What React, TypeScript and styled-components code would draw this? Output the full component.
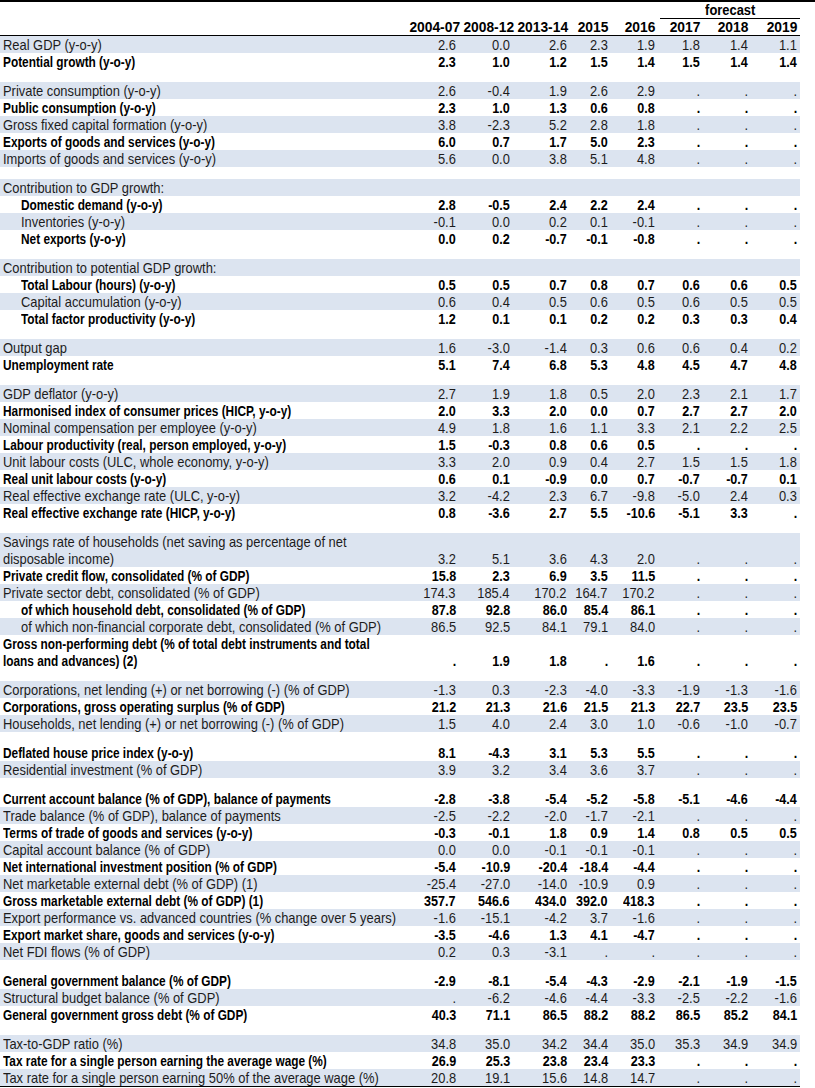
import React from 'react';
import styled, { createGlobalStyle } from 'styled-components';

// Country macro indicators table, forecast columns on the right
const COLS = '405px 54px 54px 57px 41px 47px 45px 48px 49px';
const SHADE = '#dce4f0';

type Line = {
  label: React.ReactNode;
  values: string[];
  bold?: boolean;
  indent?: boolean;
  lines?: number;
};

const D = ['.', '.', '.'];

const sections: Line[][] = [
  [
    { label: 'Real GDP (y-o-y)', values: ['2.6', '0.0', '2.6', '2.3', '1.9', '1.8', '1.4', '1.1'] },
    { label: 'Potential growth (y-o-y)', bold: true, values: ['2.3', '1.0', '1.2', '1.5', '1.4', '1.5', '1.4', '1.4'] },
  ],
  [
    { label: 'Private consumption (y-o-y)', values: ['2.6', '-0.4', '1.9', '2.6', '2.9', ...D] },
    { label: 'Public consumption (y-o-y)', bold: true, values: ['2.3', '1.0', '1.3', '0.6', '0.8', ...D] },
    { label: 'Gross fixed capital formation (y-o-y)', values: ['3.8', '-2.3', '5.2', '2.8', '1.8', ...D] },
    { label: 'Exports of goods and services (y-o-y)', bold: true, values: ['6.0', '0.7', '1.7', '5.0', '2.3', ...D] },
    { label: 'Imports of goods and services (y-o-y)', values: ['5.6', '0.0', '3.8', '5.1', '4.8', ...D] },
  ],
  [
    { label: 'Contribution to GDP growth:', values: [] },
    { label: 'Domestic demand (y-o-y)', bold: true, indent: true, values: ['2.8', '-0.5', '2.4', '2.2', '2.4', ...D] },
    { label: 'Inventories (y-o-y)', indent: true, values: ['-0.1', '0.0', '0.2', '0.1', '-0.1', ...D] },
    { label: 'Net exports (y-o-y)', bold: true, indent: true, values: ['0.0', '0.2', '-0.7', '-0.1', '-0.8', ...D] },
  ],
  [
    { label: 'Contribution to potential GDP growth:', values: [] },
    { label: 'Total Labour (hours) (y-o-y)', bold: true, indent: true, values: ['0.5', '0.5', '0.7', '0.8', '0.7', '0.6', '0.6', '0.5'] },
    { label: 'Capital accumulation (y-o-y)', indent: true, values: ['0.6', '0.4', '0.5', '0.6', '0.5', '0.6', '0.5', '0.5'] },
    { label: 'Total factor productivity (y-o-y)', bold: true, indent: true, values: ['1.2', '0.1', '0.1', '0.2', '0.2', '0.3', '0.3', '0.4'] },
  ],
  [
    { label: 'Output gap', values: ['1.6', '-3.0', '-1.4', '0.3', '0.6', '0.6', '0.4', '0.2'] },
    { label: 'Unemployment rate', bold: true, values: ['5.1', '7.4', '6.8', '5.3', '4.8', '4.5', '4.7', '4.8'] },
  ],
  [
    { label: 'GDP deflator (y-o-y)', values: ['2.7', '1.9', '1.8', '0.5', '2.0', '2.3', '2.1', '1.7'] },
    { label: 'Harmonised index of consumer prices (HICP, y-o-y)', bold: true, values: ['2.0', '3.3', '2.0', '0.0', '0.7', '2.7', '2.7', '2.0'] },
    { label: 'Nominal compensation per employee (y-o-y)', values: ['4.9', '1.8', '1.6', '1.1', '3.3', '2.1', '2.2', '2.5'] },
    { label: 'Labour productivity (real, person employed, y-o-y)', bold: true, values: ['1.5', '-0.3', '0.8', '0.6', '0.5', ...D] },
    { label: 'Unit labour costs (ULC, whole economy, y-o-y)', values: ['3.3', '2.0', '0.9', '0.4', '2.7', '1.5', '1.5', '1.8'] },
    { label: 'Real unit labour costs (y-o-y)', bold: true, values: ['0.6', '0.1', '-0.9', '0.0', '0.7', '-0.7', '-0.7', '0.1'] },
    { label: 'Real effective exchange rate (ULC, y-o-y)', values: ['3.2', '-4.2', '2.3', '6.7', '-9.8', '-5.0', '2.4', '0.3'] },
    { label: 'Real effective exchange rate (HICP, y-o-y)', bold: true, values: ['0.8', '-3.6', '2.7', '5.5', '-10.6', '-5.1', '3.3', '.'] },
  ],
  [
    {
      label: (<>Savings rate of households (net saving as percentage of net<br />disposable income)</>),
      lines: 2,
      values: ['3.2', '5.1', '3.6', '4.3', '2.0', ...D],
    },
    { label: 'Private credit flow, consolidated (% of GDP)', bold: true, values: ['15.8', '2.3', '6.9', '3.5', '11.5', ...D] },
    { label: 'Private sector debt, consolidated (% of GDP)', values: ['174.3', '185.4', '170.2', '164.7', '170.2', ...D] },
    { label: 'of which household debt, consolidated (% of GDP)', bold: true, indent: true, values: ['87.8', '92.8', '86.0', '85.4', '86.1', ...D] },
    { label: 'of which non-financial corporate debt, consolidated (% of GDP)', indent: true, values: ['86.5', '92.5', '84.1', '79.1', '84.0', ...D] },
    {
      label: (<>Gross non-performing debt (% of total debt instruments and total<br />loans and advances) (2)</>),
      bold: true,
      lines: 2,
      values: ['.', '1.9', '1.8', '.', '1.6', ...D],
    },
  ],
  [
    { label: 'Corporations, net lending (+) or net borrowing (-) (% of GDP)', values: ['-1.3', '0.3', '-2.3', '-4.0', '-3.3', '-1.9', '-1.3', '-1.6'] },
    { label: 'Corporations, gross operating surplus (% of GDP)', bold: true, values: ['21.2', '21.3', '21.6', '21.5', '21.3', '22.7', '23.5', '23.5'] },
    { label: 'Households, net lending (+) or net borrowing (-) (% of GDP)', values: ['1.5', '4.0', '2.4', '3.0', '1.0', '-0.6', '-1.0', '-0.7'] },
  ],
  [
    { label: 'Deflated house price index (y-o-y)', bold: true, values: ['8.1', '-4.3', '3.1', '5.3', '5.5', ...D] },
    { label: 'Residential investment (% of GDP)', values: ['3.9', '3.2', '3.4', '3.6', '3.7', ...D] },
  ],
  [
    { label: 'Current account balance (% of GDP), balance of payments', bold: true, values: ['-2.8', '-3.8', '-5.4', '-5.2', '-5.8', '-5.1', '-4.6', '-4.4'] },
    { label: 'Trade balance (% of GDP), balance of payments', values: ['-2.5', '-2.2', '-2.0', '-1.7', '-2.1', ...D] },
    { label: 'Terms of trade of goods and services (y-o-y)', bold: true, values: ['-0.3', '-0.1', '1.8', '0.9', '1.4', '0.8', '0.5', '0.5'] },
    { label: 'Capital account balance (% of GDP)', values: ['0.0', '0.0', '-0.1', '-0.1', '-0.1', ...D] },
    { label: 'Net international investment position (% of GDP)', bold: true, values: ['-5.4', '-10.9', '-20.4', '-18.4', '-4.4', ...D] },
    { label: 'Net marketable external debt (% of GDP) (1)', values: ['-25.4', '-27.0', '-14.0', '-10.9', '0.9', ...D] },
    { label: 'Gross marketable external debt (% of GDP) (1)', bold: true, values: ['357.7', '546.6', '434.0', '392.0', '418.3', ...D] },
    { label: 'Export performance vs. advanced countries (% change over 5 years)', values: ['-1.6', '-15.1', '-4.2', '3.7', '-1.6', ...D] },
    { label: 'Export market share, goods and services (y-o-y)', bold: true, values: ['-3.5', '-4.6', '1.3', '4.1', '-4.7', ...D] },
    { label: 'Net FDI flows (% of GDP)', values: ['0.2', '0.3', '-3.1', '.', '.', ...D] },
  ],
  [
    { label: 'General government balance (% of GDP)', bold: true, values: ['-2.9', '-8.1', '-5.4', '-4.3', '-2.9', '-2.1', '-1.9', '-1.5'] },
    { label: 'Structural budget balance (% of GDP)', values: ['.', '-6.2', '-4.6', '-4.4', '-3.3', '-2.5', '-2.2', '-1.6'] },
    { label: 'General government gross debt (% of GDP)', bold: true, values: ['40.3', '71.1', '86.5', '88.2', '88.2', '86.5', '85.2', '84.1'] },
  ],
  [
    { label: 'Tax-to-GDP ratio (%)', values: ['34.8', '35.0', '34.2', '34.4', '35.0', '35.3', '34.9', '34.9'] },
    { label: 'Tax rate for a single person earning the average wage (%)', bold: true, values: ['26.9', '25.3', '23.8', '23.4', '23.3', ...D] },
    { label: 'Tax rate for a single person earning 50% of the average wage (%)', values: ['20.8', '19.1', '15.6', '14.8', '14.7', ...D] },
  ],
];

const years = ['2004-07', '2008-12', '2013-14', '2015', '2016', '2017', '2018', '2019'];

const GlobalStyle = createGlobalStyle`
  html, body {
    margin: 0;
    padding: 0;
    background: #fff;
  }
  body {
    font-family: "Liberation Sans", Arial, sans-serif;
    font-size: 15px;
    color: #1a1a1a;
  }
`;

const Page = styled.div`
  width: 815px;
  border-top: 2px solid #000;
`;

const Table = styled.div`
  width: 800px;
  border-bottom: 1px solid #000;
`;

const Grid = styled.div`
  display: grid;
  grid-template-columns: ${COLS};
`;

const ForecastRow = styled(Grid)`
  height: 17px;
`;

const Forecast = styled.div`
  grid-column: 7 / 10;
  margin-left: 2px;
  border-bottom: 1px solid #000;
  display: flex;
  justify-content: center;
  font-weight: 700;
  color: #000;
  line-height: 16px;
`;

// no narrow face is installed: Arial-width text is squeezed to the Arial Narrow look
const Narrow = styled.span<{ $scale: number; $from: 'left' | 'right' | 'center' }>`
  display: inline-block;
  transform: scaleX(${(p) => p.$scale});
  transform-origin: ${(p) => p.$from} center;
`;

const YearRow = styled(Grid)`
  height: 16px;
  border-bottom: 1px solid #000;
  font-weight: 700;
  color: #000;
  line-height: 16px;
`;

const Row = styled(Grid)<{ $bold?: boolean; $lines: number }>`
  height: ${(p) => p.$lines * 17}px;
  align-items: end;
  background: ${(p) => (p.$bold ? 'transparent' : SHADE)};
  font-weight: ${(p) => (p.$bold ? 700 : 400)};
  color: ${(p) => (p.$bold ? '#000' : '#1c1c1c')};
  line-height: 17px;
`;

const Label = styled.div<{ $indent?: boolean }>`
  padding-left: ${(p) => (p.$indent ? 21 : 3)}px;
  white-space: nowrap;
`;

const Num = styled.div`
  text-align: right;
  padding-right: 3px;
  white-space: nowrap;
`;

const Gap = styled.div`
  height: 12px;
`;

export default function App() {
  return (
    <Page>
      <GlobalStyle />
      <Table>
        <ForecastRow>
          <Forecast>
            <Narrow $scale={0.86} $from="center">forecast</Narrow>
          </Forecast>
        </ForecastRow>
        <YearRow>
          <div />
          {years.map((y) => (
            <Num key={y}>
              <Narrow $scale={0.92} $from="right">{y}</Narrow>
            </Num>
          ))}
        </YearRow>
        {sections.map((sec, si) => (
          <React.Fragment key={si}>
            {si > 0 && <Gap />}
            {sec.map((line, li) => (
              <Row key={li} $bold={line.bold} $lines={line.lines ?? 1}>
                <Label $indent={line.indent}>
                  <Narrow $scale={line.bold ? 0.79 : 0.86} $from="left">{line.label}</Narrow>
                </Label>
                {line.values.map((v, vi) => (
                  <Num key={vi}>
                    <Narrow $scale={line.bold ? 0.84 : 0.86} $from="right">{v}</Narrow>
                  </Num>
                ))}
              </Row>
            ))}
          </React.Fragment>
        ))}
      </Table>
    </Page>
  );
}
